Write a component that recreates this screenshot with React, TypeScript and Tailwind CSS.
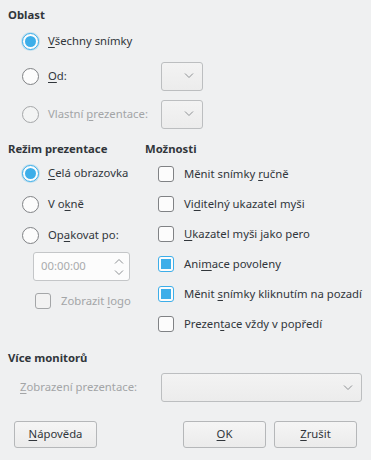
import React from 'react';

const font = { fontFamily: '"Noto Sans", "DejaVu Sans", sans-serif' };

const Chevron = ({ up = false }: { up?: boolean }) => (
  <svg width="10" height="6" viewBox="0 0 10 6" className="block">
    <path
      d={up ? 'M1 5.5 L5 1.5 L9 5.5' : 'M1 0.5 L5 4.5 L9 0.5'}
      fill="none"
      stroke="#8d9093"
      strokeWidth="1"
    />
  </svg>
);

const U = ({ children }: { children: React.ReactNode }) => (
  <span className="underline underline-offset-2 decoration-1">{children}</span>
);

const Radio = ({ checked = false, disabled = false }: { checked?: boolean; disabled?: boolean }) => (
  <div
    className={`w-[17px] h-[17px] rounded-full border flex items-center justify-center shrink-0 ${
      checked
        ? 'border-[#3daee9] bg-[#fcfcfc] shadow-[0_0_0_1px_rgba(61,174,233,0.25)]'
        : disabled
        ? 'border-[#a4a6a8] bg-[#f3f4f4]'
        : 'border-[#808285] bg-[#fcfcfc]'
    }`}
  >
    {checked && <div className="w-[11px] h-[11px] rounded-full bg-[#3daee9]" />}
  </div>
);

const Check = ({ checked = false, disabled = false }: { checked?: boolean; disabled?: boolean }) => (
  <div
    className={`w-4 h-4 rounded-[3px] border flex items-center justify-center shrink-0 ${
      checked
        ? 'border-[#3daee9] bg-[#fcfcfc]'
        : disabled
        ? 'border-[#a4a6a8] bg-[#f2f2f2]'
        : 'border-[#808285] bg-[#fcfcfc]'
    }`}
  >
    {checked && <div className="w-[10px] h-[10px] bg-[#3daee9]" />}
  </div>
);

const Combo = ({ className = '' }: { className?: string }) => (
  <div
    className={`h-[29px] rounded-[3px] border border-[#bcbec0] bg-gradient-to-b from-[#f3f3f3] to-[#ececec] flex items-center justify-end pr-[8px] ${className}`}
  >
    <Chevron />
  </div>
);

const Button = ({ children }: { children: React.ReactNode }) => (
  <div className="w-[83px] h-[27px] rounded-[3px] border border-[#b5b7b9] bg-gradient-to-b from-[#f5f5f5] to-[#ebebeb] flex items-center justify-center text-[#31363b]">
    {children}
  </div>
);

const Heading = ({ children }: { children: React.ReactNode }) => (
  <div className="font-bold text-[#31363b] h-[14px] leading-[14px]">{children}</div>
);

const RadioRow = ({
  checked,
  disabled,
  children,
}: {
  checked?: boolean;
  disabled?: boolean;
  children: React.ReactNode;
}) => (
  <div className="flex items-center h-[31px] pl-[14px] gap-[9px]">
    <Radio checked={checked} disabled={disabled} />
    <span className={disabled ? 'text-[#a3a5a7]' : 'text-[#31363b]'}>{children}</span>
  </div>
);

const CheckRow = ({ checked, children }: { checked?: boolean; children: React.ReactNode }) => (
  <div className="flex items-center h-[30px] pl-[13px] gap-[10px]">
    <Check checked={checked} />
    <span className="text-[#31363b] whitespace-nowrap">{children}</span>
  </div>
);

export default function App() {
  return (
    <div
      className="w-[371px] h-[460px] bg-[#eff0f1] text-[11.3px] overflow-hidden pl-[8px] pt-[8px]"
      style={font}
    >
      {/* Oblast */}
      <Heading>Oblast</Heading>
      <div className="mt-[4px] flex flex-col">
        <RadioRow checked>
          <U>V</U>šechny snímky
        </RadioRow>
        <div className="flex items-center h-[38px]">
          <div className="w-[153px]">
            <RadioRow>
              <U>O</U>d:
            </RadioRow>
          </div>
          <Combo className="w-[42px]" />
        </div>
        <div className="flex items-center h-[38px]">
          <div className="w-[153px]">
            <RadioRow disabled>
              Vlastní <U>p</U>rezentace:
            </RadioRow>
          </div>
          <Combo className="w-[42px]" />
        </div>
      </div>

      {/* Režim + Možnosti */}
      <div className="mt-[9px] flex">
        <div className="w-[137px] flex flex-col">
          <Heading>Režim prezentace</Heading>
          <div className="mt-[2px] flex flex-col">
            <RadioRow checked>
              <U>C</U>elá obrazovka
            </RadioRow>
            <RadioRow>
              V o<U>k</U>ně
            </RadioRow>
            <RadioRow>
              Op<U>a</U>kovat po:
            </RadioRow>
          </div>
          <div className="ml-[25px] mt-[1px] w-[97px] h-[29px] rounded-[3px] border border-[#c4c6c8] bg-[#fcfcfc] flex items-center justify-between pl-[7px] pr-[5px]">
            <span className="text-[#a9abad]">00:00:00</span>
            <div className="flex flex-col gap-[6px]">
              <Chevron up />
              <Chevron />
            </div>
          </div>
          <div className="flex items-center h-[30px] pl-[27px] gap-[10px] mt-[5px]">
            <Check disabled />
            <span className="text-[#a3a5a7]">
              Zobrazit <U>l</U>ogo
            </span>
          </div>
        </div>
        <div className="flex flex-col">
          <Heading>Možnosti</Heading>
          <div className="mt-[3px] flex flex-col">
            <CheckRow>
              Měnit snímky <U>r</U>učně
            </CheckRow>
            <CheckRow>
              Vi<U>d</U>itelný ukazatel myši
            </CheckRow>
            <CheckRow>
              <U>U</U>kazatel myši jako pero
            </CheckRow>
            <CheckRow checked>
              Ani<U>m</U>ace povoleny
            </CheckRow>
            <CheckRow checked>
              Měnit <U>s</U>nímky kliknutím na pozadí
            </CheckRow>
            <CheckRow>
              Prezen<U>t</U>ace vždy v popředí
            </CheckRow>
          </div>
        </div>
      </div>

      {/* Více monitorů */}
      <div className="mt-[12px]">
        <Heading>Více monitorů</Heading>
        <div className="mt-[8px] flex items-center">
          <span className="w-[153px] pl-[12px] text-[#a3a5a7]">
            <U>Z</U>obrazení prezentace:
          </span>
          <Combo className="w-[201px] pr-[6px]" />
        </div>
      </div>

      {/* Buttons */}
      <div className="mt-[19px] flex items-center pl-[6px]">
        <Button>
          <U>N</U>ápověda
        </Button>
        <div className="ml-[86px]">
          <Button>
            <U>O</U>K
          </Button>
        </div>
        <div className="ml-[8px]">
          <Button>
            <U>Z</U>rušit
          </Button>
        </div>
      </div>
    </div>
  );
}
